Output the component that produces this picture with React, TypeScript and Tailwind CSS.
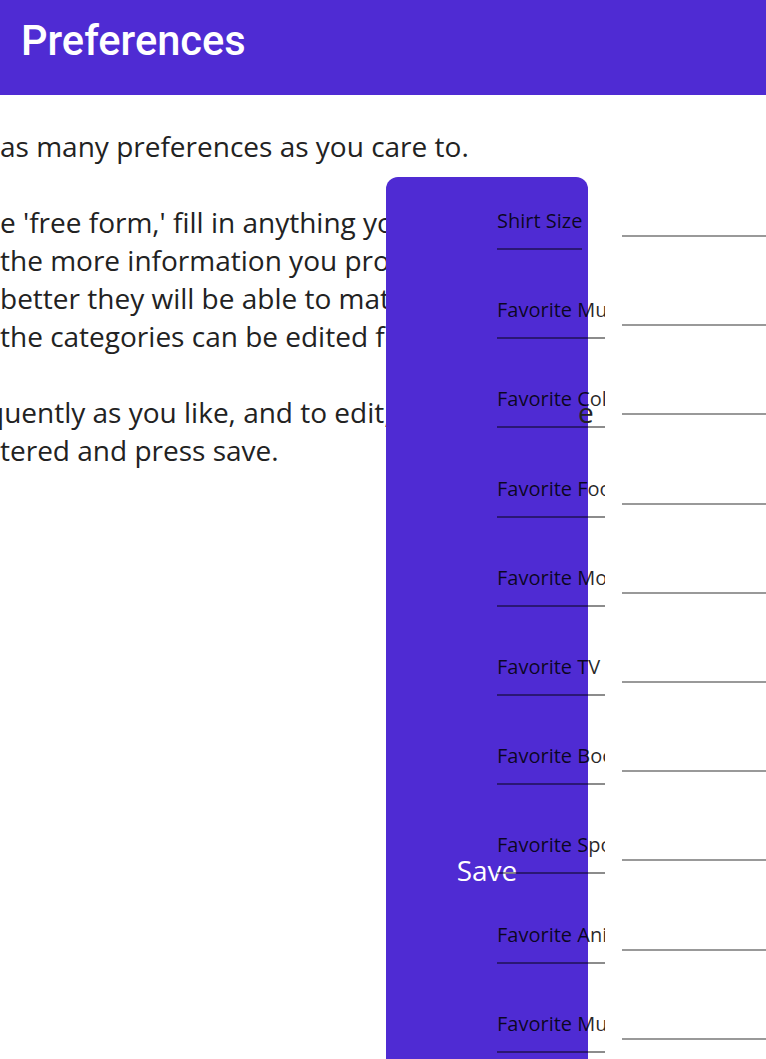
import React from "react";

const labels = [
  "Shirt Size",
  "Favorite Music",
  "Favorite Color",
  "Favorite Food",
  "Favorite Movies",
  "Favorite TV Shows",
  "Favorite Books",
  "Favorite Sports",
  "Favorite Animals",
  "Favorite Museums",
];

export default function App() {
  return (
    <div className="relative min-h-screen w-full overflow-hidden bg-white">
      <header className="h-[95px] bg-[#4f2bd3] pl-[21px] pt-[16px]">
        <h1
          className="text-[41.6px] leading-[49px] font-medium text-white"
          style={{ fontFamily: "Roboto, 'Liberation Sans', sans-serif" }}
        >
          Preferences
        </h1>
      </header>

      <main className="relative h-[964px]">
        <div
          className="pt-[32px] text-[28px] leading-[38px] text-[#222] whitespace-nowrap"
          style={{ fontFamily: "'Open Sans', 'Noto Sans', sans-serif" }}
        >
          <div>as many preferences as you care to.</div>
          <div className="h-[38px]" />
          <div>e 'free form,' fill in anything you like</div>
          <div>the more information you provide</div>
          <div>better they will be able to match</div>
          <div>the categories can be edited for</div>
          <div className="h-[38px]" />
          <div className="relative ml-[-13px]">
            quently as you like, and to edit, simply
            <span className="absolute left-[591px] top-0 z-20">e</span>
          </div>
          <div>tered and press save.</div>
        </div>

        <button
          className="absolute left-[386px] top-[82px] z-10 flex h-[1386px] w-[202px] items-center justify-center rounded-[12px] bg-[#4f2bd3] text-[28px] text-white"
          style={{ fontFamily: "'Open Sans', 'Noto Sans', sans-serif" }}
        >
          Save
        </button>

        <div
          className="absolute left-[497px] top-[112px] z-30 flex flex-col"
          style={{ fontFamily: "'Open Sans', 'Noto Sans', sans-serif" }}
        >
          {labels.map((l) => (
            <div
              key={l}
              className="grid h-[89.2px] grid-cols-[108px_300px] gap-x-[17px] items-start"
            >
              <label className="w-fit max-w-[108px] overflow-hidden whitespace-nowrap border-b-2 border-black/45 pb-[13px] text-[20px] leading-[28px] text-black/85">
                {l}
              </label>
              <input
                type="text"
                className="-mt-[2px] h-[32px] w-[300px] border-b-2 border-black/40 bg-transparent outline-none"
              />
            </div>
          ))}
        </div>
      </main>
    </div>
  );
}
